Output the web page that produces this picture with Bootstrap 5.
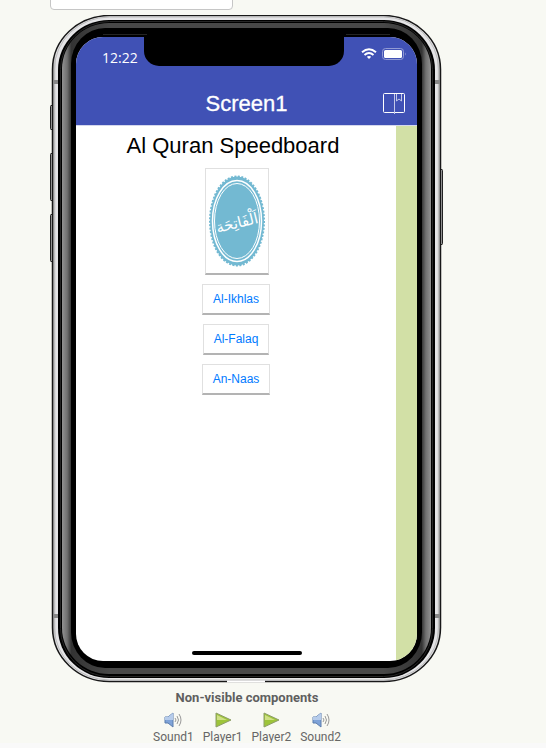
<!DOCTYPE html>
<html lang="en">
<head>
<meta charset="utf-8">
<meta name="viewport" content="width=device-width, initial-scale=1">
<title>Screen1</title>
<link href="https://cdn.jsdelivr.net/npm/bootstrap@5.3.0/dist/css/bootstrap.min.css" rel="stylesheet">
<style>
body{background:#f8f9f3;font-family:"Liberation Sans",Arial,sans-serif;color:#000}
.designer{min-height:743px;padding-left:50px}
.size-picker{width:183px;height:38px;margin-top:-28px;border:1px solid #c6c6c6;border-radius:4px;background:#fff;font-size:13px;color:#666;padding:0 12px}
.phone{width:394px;margin-top:5px;padding:22px 27px 21px 26px;position:relative}
.phone-frame{position:absolute;left:0;top:0;width:394px;height:668px}
.phone-screen{position:relative;border-radius:27px;overflow:hidden;background:#fff;min-height:624px}
.app-head{background:#4051b5;color:#fff;border-bottom:1px solid #d4d7ed}
.status-row{height:46px;padding:0 11px 0 26px}
.clock{font:14px/20px "Open Sans",sans-serif;margin-top:11px}
.notch{position:absolute;left:68px;top:-1px;width:200px;height:30px;background:#000;border-radius:0 0 15px 15px}
.title-row{height:42px}
.title-row h1{font-size:22px;line-height:42px;-webkit-text-stroke:.3px #fff}
.menu-btn{position:absolute;right:11px;top:9px;width:24px;height:24px}
.app-body{width:320px}
.strip{background:#d2e0a6}
.heading{font-size:22px;line-height:26px;margin:7px 6px 0 0}
.app-btn{background:#fff;border:1px solid #e0e0e0;border-bottom:2px solid #b3b3b3;color:#007aff;font-size:12px;line-height:14px;padding:7px 10px}
.pic-btn{padding:6px 2px 7px;width:64px;height:107px;margin-left:1px}
.buttons{gap:9px;margin-top:9px}
.emblem-text{font:15px "DejaVu Sans",sans-serif}
.home-bar{position:absolute;left:116px;bottom:6px;width:110px;height:4px;border-radius:2px;background:#000}
.components{width:394px;height:61px;overflow:hidden;font:12px/16px Roboto,sans-serif;color:#666}
.components h2{font-size:13px;line-height:16px;color:#5f5f5f;margin:8px 0 5px}
.component-list{gap:9px}
.foot{background:#f9f9f9;height:5px}
</style>
</head>
<body>
<div class="overflow-hidden">
<main class="designer">
<select class="size-picker d-block appearance-none" aria-label="Screen size"><option>Phone size (505,320)</option></select>
<section class="phone">
<svg class="phone-frame" viewBox="50 15 394 668" aria-hidden="true">
<defs>
<linearGradient id="metal"><stop stop-color="#999"/><stop offset=".009" stop-color="#e4e4e6"/><stop offset=".991" stop-color="#e4e4e6"/><stop offset="1" stop-color="#aaa"/></linearGradient>
<linearGradient id="band" gradientUnits="userSpaceOnUse" x1="62" x2="431" y1="0" y2="0"><stop stop-color="#929292"/><stop offset=".014" stop-color="#707070"/><stop offset=".025" stop-color="#333"/><stop offset=".13" stop-color="#484848"/><stop offset=".87" stop-color="#484848"/><stop offset=".975" stop-color="#333"/><stop offset=".986" stop-color="#707070"/><stop offset="1" stop-color="#929292"/></linearGradient>
</defs>
<path fill="#b9b9b9" stroke="#222" d="M53 105.500h-2q-.5 0-.5 1v22q0 1 .5 1h2zM53 153.500h-2q-.5 0-.5 1v45q0 1 .5 1h2zM53 214.500h-2q-.5 0-.5 1v45q0 1 .5 1h2zM440 169.500h2q.5 0 .5 1v73q0 1-.5 1h-2z"/>
<rect x="52.500" y="15.500" width="388" height="666" rx="57" ry="54" fill="url(#metal)" stroke="#181818" stroke-width="1.500"/>
<rect x="54.500" y="17" width="384" height="663" rx="55" ry="52" fill="none" stroke="#bcbcbc"/>
<path d="M53 80h6v4h-6zM434 80h6v4h-6zM53 614h6v4h-6zM434 614h6v4h-6z" fill="#888"/>
<rect x="58" y="20" width="377" height="658" rx="51" ry="50"/>
<rect x="60.500" y="21.500" width="372" height="655" rx="49" ry="48" fill="none" stroke="#262626"/>
<rect x="62" y="23" width="369" height="651" rx="47" ry="46" fill="url(#band)"/>
<rect x="71" y="28" width="351" height="640" rx="34" ry="36"/>
<path d="M103 34.500h44M346 34.500h44" stroke="#242424"/>
<path d="M227 681.500h38" stroke="#fff" stroke-width="2"/>
</svg>
<div class="phone-screen d-flex flex-column">
<header class="app-head">
<div class="status-row d-flex justify-content-between">
<span class="clock">12:22</span><div class="notch"></div>
<svg width="46" height="16" viewBox="0 0 46 16" class="mt-2" role="img" aria-label="Wi-Fi and battery">
<g fill="none" stroke="#fff" stroke-width="2"><path d="M2 7.200q7-6 14 0M4.500 10q4.500-4 9 0"/></g><path d="M6.800 11.800q2.200-1.800 4.400 0L9 14z" fill="#fff"/>
<rect x="22.500" y="3.500" width="21" height="11" rx="3" fill="none" stroke="#929bd4"/><rect x="24" y="5" width="18" height="8" rx="1.500" fill="#fff"/><path d="M45 7.500q1.500 1.500 0 3" fill="#929bd4"/></svg>
</div>
<div class="title-row position-relative"><h1 class="text-center fw-normal m-0">Screen1</h1>
<button class="menu-btn btn p-0 border-0" aria-label="Open book"><svg class="d-block" width="24" height="24" viewBox="0 0 24 24" fill="none" stroke="#fff"><rect x="1.500" y="1.500" width="21" height="19" rx="1"/><path d="M12.500 2v20M14.500 2v7l2.500-2 2.500 2V2" stroke="#c3c8e8"/></svg></button></div>
</header>
<div class="d-flex flex-grow-1"><div class="app-body text-center">
<h2 class="heading fw-normal">Al Quran Speedboard</h2>
<div class="buttons d-flex flex-column align-items-center">
<button class="app-btn pic-btn" aria-label="Al-Fatihah"><svg class="d-block" width="58" height="92" viewBox="0 0 58 92"><ellipse cx="29" cy="46" rx="27" ry="44.500" fill="#73b9d2" stroke="#73b9d2" stroke-width="2" stroke-dasharray="2 1.500"/><ellipse cx="29" cy="46" rx="24.500" ry="40.500" fill="none" stroke="#fff" stroke-width="1.500"/><ellipse cx="29" cy="46" rx="22.500" ry="37.500" fill="none" stroke="#fff"/>
<text class="emblem-text" x="29" y="53" text-anchor="middle" fill="#fff" lang="ar" transform="rotate(-14 29 48)">اَلْفَاتِحَة</text></svg></button>
<button class="app-btn">Al-Ikhlas</button><button class="app-btn">Al-Falaq</button><button class="app-btn">An-Naas</button>
</div></div><div class="strip flex-grow-1"></div></div>
<div class="home-bar"></div>
</div>
</section>
<section class="components text-center">
<h2 class="fw-bold">Non-visible components</h2>
<div class="component-list d-flex justify-content-center">
<div><svg class="d-block mx-auto" width="18" height="18" viewBox="0 0 18 18"><path d="M1 6h3l5-4v14l-5-4H1z" fill="#7fa3d8" stroke="#5b7cad"/><path d="M4 6l5-4v7H1V6z" fill="#b6cceb"/><path d="M11 7q2 2 0 4M13 5q3 4 0 8M15 3q4 6 0 12" fill="none" stroke="#999"/></svg>Sound1</div>
<div><svg class="d-block mx-auto" width="18" height="18" viewBox="0 0 18 18"><path d="M2 2l15 7-15 7z" fill="#9dc439" stroke="#8d9d68"/><path d="M3 4l10 5H3z" fill="#cfe085"/></svg>Player1</div>
<div><svg class="d-block mx-auto" width="18" height="18" viewBox="0 0 18 18"><path d="M2 2l15 7-15 7z" fill="#9dc439" stroke="#8d9d68"/><path d="M3 4l10 5H3z" fill="#cfe085"/></svg>Player2</div>
<div><svg class="d-block mx-auto" width="18" height="18" viewBox="0 0 18 18"><path d="M1 6h3l5-4v14l-5-4H1z" fill="#7fa3d8" stroke="#5b7cad"/><path d="M4 6l5-4v7H1V6z" fill="#b6cceb"/><path d="M11 7q2 2 0 4M13 5q3 4 0 8M15 3q4 6 0 12" fill="none" stroke="#999"/></svg>Sound2</div>
</div></section>
</main>
<div class="foot"></div></div>
<script src="https://cdn.jsdelivr.net/npm/bootstrap@5.3.0/dist/js/bootstrap.bundle.min.js"></script>
</body>
</html>
